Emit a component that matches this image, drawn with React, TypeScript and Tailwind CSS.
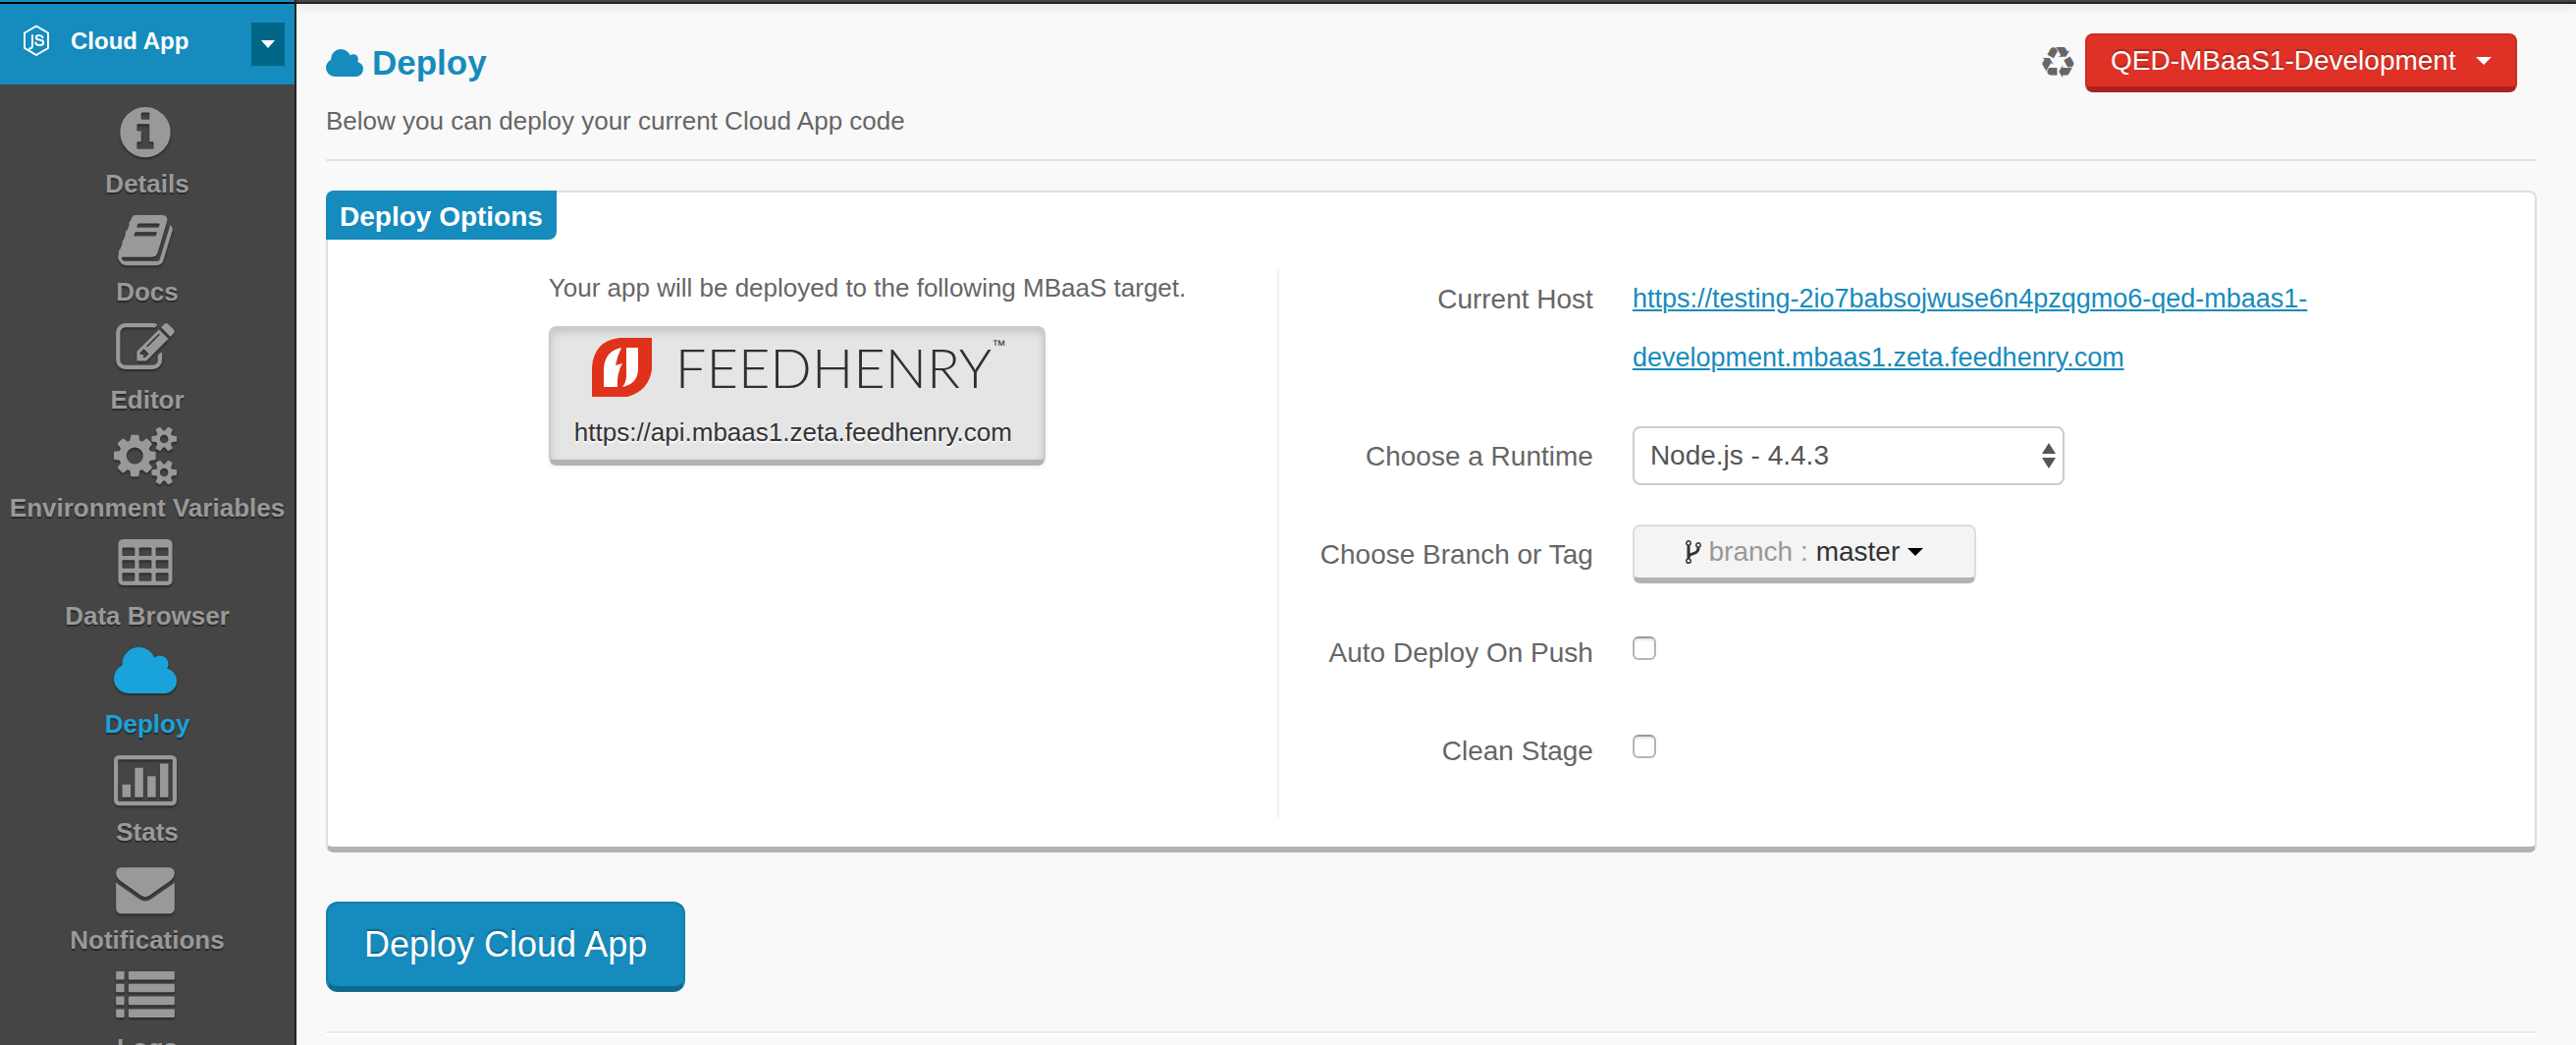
import type { ReactNode } from 'react';

const BOOK =
  'M1703 478q40 57 18 129l-275 906q-19 64-76.5 107.5t-122.5 43.5h-923q-77 0-148.5-53.5t-99.5-131.5q-24-67-2-127 0-4 3-27t4-37q1-8-3-21.5t-3-19.5q2-11 8-21t16.5-23.5 16.5-23.5q23-38 45-91.5t30-91.5q3-10 .5-30t-.5-28q3-11 17-28t17-23q21-36 42-92t25-90q1-9-2.5-32t.5-28q4-13 22-30.5t22-22.5q19-26 42.5-84.5t27.5-96.5q1-8-3-25.5t-2-26.5q2-8 9-18t18-23 17-21q8-12 16.5-30.5t15-35 16-36 19.5-32 26.5-23.5 36-11.5 47.5 5.5l-1 3q38-9 51-9h761q74 0 114 56t18 130l-274 906q-36 119-71.5 153.5t-128.5 34.5h-869q-27 0-38 15-11 16-1 43 24 70 144 70h923q29 0 56-15.5t35-41.5l300-987q7-22 5-57 38 15 59 43zm-1064 2q-4 13 2 22.5t20 9.5h608q13 0 25.5-9.5t16.5-22.5l21-64q4-13-2-22.5t-20-9.5h-608q-13 0-25.5 9.5t-16.5 22.5zm-83 256q-4 13 2 22.5t20 9.5h608q13 0 25.5-9.5t16.5-22.5l21-64q4-13-2-22.5t-20-9.5h-608q-13 0-25.5 9.5t-16.5 22.5z';
const INFO =
  'M1152 1376v-160q0-14-9-23t-23-9h-96v-512q0-14-9-23t-23-9h-320q-14 0-23 9t-9 23v160q0 14 9 23t23 9h96v320h-96q-14 0-23 9t-9 23v160q0 14 9 23t23 9h448q14 0 23-9t9-23zm-128-896v-160q0-14-9-23t-23-9h-192q-14 0-23 9t-9 23v160q0 14 9 23t23 9h192q14 0 23-9t9-23zm640 416q0 209-103 385.5t-279.5 279.5-385.5 103-385.5-103-279.5-279.5-103-385.5 103-385.5 279.5-279.5 385.5-103 385.5 103 279.5 279.5 103 385.5z';
const EDIT =
  'M888 1184l116-116-152-152-116 116v56h96v96h56zm440-720q-16-16-33 1l-350 350q-17 17-1 33t33-1l350-350q17-17 1-33zm80 594v190q0 119-84.5 203.5t-203.5 84.5h-832q-119 0-203.5-84.5t-84.5-203.5v-832q0-119 84.5-203.5t203.5-84.5h832q63 0 117 25 15 7 18 23 3 17-9 29l-49 49q-14 14-32 8-23-6-45-6h-832q-66 0-113 47t-47 113v832q0 66 47 113t113 47h832q66 0 113-47t47-113v-126q0-13 9-22l64-64q15-15 35-7t20 29zm-96-738l288 288-672 672h-288v-288zm444 132l-92 92-288-288 92-92q28-28 68-28t68 28l152 152q28 28 28 68t-28 68z';
const COGS =
  'M896 896q0-106-75-181t-181-75-181 75-75 181 75 181 181 75 181-75 75-181zm768 512q0-52-38-90t-90-38-90 38-38 90q0 53 37.5 90.5t90.5 37.5 90.5-37.5 37.5-90.5zm0-1024q0-52-38-90t-90-38-90 38-38 90q0 53 37.5 90.5t90.5 37.5 90.5-37.5 37.5-90.5zm-384 421v185q0 10-7 19.5t-16 10.5l-155 24q-11 35-32 76 34 48 90 115 7 11 7 20 0 12-7 19-23 30-82.5 89.5t-78.5 59.5q-11 0-21-7l-115-90q-37 19-77 31-11 108-23 155-7 24-30 24h-186q-11 0-20-7.5t-10-17.5l-23-153q-34-10-75-31l-118 89q-7 7-20 7-11 0-21-8-144-133-144-160 0-9 7-19 10-14 41-53t47-61q-23-44-35-82l-152-24q-10-1-17-9.5t-7-19.5v-185q0-10 7-19.5t16-10.5l155-24q11-35 32-76-34-48-90-115-7-11-7-20 0-12 7-20 22-30 82-89t79-59q11 0 21 7l115 90q34-18 77-32 11-108 23-154 7-24 30-24h186q11 0 20 7.5t10 17.5l23 153q34 10 75 31l118-89q8-7 20-7 11 0 21 8 144 133 144 160 0 8-7 19-12 16-42 54t-45 60q23 48 34 82l152 23q10 2 17 10.5t7 19.5zm640 533v140q0 16-149 31-12 27-30 52 51 113 51 138 0 4-4 7-122 71-124 71-8 0-46-47t-52-68q-20 2-30 2t-30-2q-14 21-52 68t-46 47q-2 0-124-71-4-3-4-7 0-25 51-138-18-25-30-52-149-15-149-31v-140q0-16 149-31 13-29 30-52-51-113-51-138 0-4 4-7 4-2 35-20t59-34 30-16q8 0 46 46.5t52 67.5q20-2 30-2t30 2q51-71 92-112l6-2q4 0 124 70 4 3 4 7 0 25-51 138 17 23 30 52 149 15 149 31zm0-1024v140q0 16-149 31-12 27-30 52 51 113 51 138 0 4-4 7-122 71-124 71-8 0-46-47t-52-68q-20 2-30 2t-30-2q-14 21-52 68t-46 47q-2 0-124-71-4-3-4-7 0-25 51-138-18-25-30-52-149-15-149-31v-140q0-16 149-31 13-29 30-52-51-113-51-138 0-4 4-7 4-2 35-20t59-34 30-16q8 0 46 46.5t52 67.5q20-2 30-2t30 2q51-71 92-112l6-2q4 0 124 70 4 3 4 7 0 25-51 138 17 23 30 52 149 15 149 31z';
const CLOUD =
  'M1984 1152q0 159-112.5 271.5t-271.5 112.5h-1088q-185 0-316.5-131.5t-131.5-316.5q0-132 71-241.5t187-163.5q-2-28-2-43 0-212 150-362t362-150q158 0 286.5 88t187.5 230q70-62 166-62 106 0 181 75t75 181q0 75-41 138 129 30 213 134.5t84 239.5z';
const ENVELOPE =
  'M1792 710v794q0 66-47 113t-113 47h-1472q-66 0-113-47t-47-113v-794q44 49 101 87 362 246 497 345 57 42 92.5 65.5t94.5 48 110 24.5h2q51 0 110-24.5t94.5-48 92.5-65.5q170-123 498-345 57-39 100-87zm0-294q0 79-49 151t-122 123q-376 261-468 325-10 7-42.5 31t-54 38.5-52 32.5-57.5 27-50 9h-2q-23 0-50-9t-57.5-27-52-32.5-54-38.5-42.5-31q-91-64-262-182.5t-205-142.5q-62-42-117-115.5t-55-136.5q0-78 41.5-130t118.5-52h1472q65 0 112.5 47t47.5 113z';
const FORK =
  'M672 1472q0-40-28-68t-68-28-68 28-28 68 28 68 68 28 68-28 28-68zm0-1152q0-40-28-68t-68-28-68 28-28 68 28 68 68 28 68-28 28-68zm640 128q0-40-28-68t-68-28-68 28-28 68 28 68 68 28 68-28 28-68zm96 0q0 52-26 96.5t-70 69.5q-2 287-226 414-67 38-203 81-128 40-169.5 71t-41.5 100v26q44 25 70 69.5t26 96.5q0 80-56 136t-136 56-136-56-56-136q0-52 26-96.5t70-69.5v-820q-44-25-70-69.5t-26-96.5q0-80 56-136t136-56 136 56 56 136q0 52-26 96.5t-70 69.5v497q54-26 154-57 55-17 87.5-29.5t70.5-31 59-39.5 40.5-51 28-69.5 8.5-91.5q-44-25-70-69.5t-26-96.5q0-80 56-136t136-56 136 56 56 136z';

type NavItem = { label: string; viewBox: string; icon: ReactNode; active?: boolean };

const columns = [128, 640, 1152];
const rows = [256, 640, 1024];
const lines = [0, 384, 768, 1152];

const NAV: NavItem[] = [
  { label: 'Details', viewBox: '-64 -84 1920 1920', icon: <path d={INFO} /> },
  { label: 'Docs', viewBox: '-64 -84 1920 1920', icon: <path d={BOOK} /> },
  { label: 'Editor', viewBox: '-64 -84 1920 1920', icon: <path d={EDIT} /> },
  { label: 'Environment Variables', viewBox: '0 -64 1920 1920', icon: <path d={COGS} /> },
  {
    label: 'Data Browser',
    viewBox: '-128 -210 1920 1920',
    icon: (
      <>
        <mask id="cells">
          <rect width="1664" height="1408" fill="white" />
          {rows.map((y) =>
            columns.map((x) => <rect key={x + '-' + y} x={x} y={y} width="384" height="256" rx="32" fill="black" />),
          )}
        </mask>
        <rect width="1664" height="1408" rx="160" mask="url(#cells)" />
      </>
    ),
  },
  { label: 'Deploy', viewBox: '64 -84 1920 1920', icon: <path d={CLOUD} />, active: true },
  {
    label: 'Stats',
    viewBox: '0 -210 1920 1920',
    icon: (
      <>
        <rect x="64" y="64" width="1792" height="1408" rx="96" fill="none" stroke="currentColor" strokeWidth="128" />
        <path d="M256 896h256v384H256zM640 384h256v896H640zM1024 640h256v640h-256zM1408 256h256v1024h-256z" />
      </>
    ),
  },
  { label: 'Notifications', viewBox: '-64 -84 1920 1920', icon: <path d={ENVELOPE} /> },
  {
    label: 'Logs',
    viewBox: '-64 -210 1920 1920',
    icon: lines.map((y) => (
      <g key={y}>
        <rect y={y} width="256" height="256" rx="32" />
        <rect x="384" y={y} width="1408" height="256" rx="32" />
      </g>
    )),
  },
];

function Caret({ className }: { className: string }) {
  return (
    <svg viewBox="0 0 16 8" preserveAspectRatio="none" fill="currentColor" className={className} aria-hidden="true">
      <path d="M0 0h16L8 8z" />
    </svg>
  );
}

function Sidebar() {
  return (
    <aside className="w-[302px] shrink-0 overflow-hidden border-r-2 border-[#232525] bg-[#444544]">
      <div className="h-0.5 bg-[#168bbd]" />
      <div className="flex h-[84px] items-center border-t-2 border-black bg-[#168bbd] pr-[10px] pl-[23px] text-white">
        <svg
          viewBox="0 0 28 32"
          fill="none"
          stroke="currentColor"
          strokeWidth="2"
          strokeLinejoin="round"
          strokeLinecap="round"
          className="mb-2 h-8 w-7"
          aria-hidden="true"
        >
          <path d="M10 28.6L2 24V8.500L14 1.500l12 7V24l-12 7-3-1.700M10 11v10.500q0 3-3 3M20.500 13q-1-2-3.500-2-3.200 0-3.200 2.300 0 2 3.500 2.300 3.900.4 3.900 2.900 0 2.600-3.900 2.600-3.500 0-4-2.500" />
        </svg>
        <span className="mb-1.5 ml-[21px] flex-1 text-2xl font-bold">Cloud App</span>
        <button type="button" aria-label="Switch app" className="flex h-11 w-[34px] items-center justify-center bg-[#006687]">
          <Caret className="h-2 w-[14px]" />
        </button>
      </div>
      <nav className="flex flex-col pt-4">
        {NAV.map(({ label, viewBox, icon, active }) => (
          <a
            key={label}
            href={'#' + label.toLowerCase().replace(' ', '-')}
            className={
              'flex h-[110px] flex-col items-center text-[26px] leading-8 font-bold whitespace-nowrap [text-shadow:0_2px_1px_#2b2b2b] ' +
              (active ? 'text-[#1aa2db]' : 'text-[#999999]')
            }
          >
            <svg viewBox={viewBox} fill="currentColor" className="mr-1 h-16 w-16 drop-shadow-[0_2px_1px_#2b2b2b]" aria-hidden="true">
              {icon}
            </svg>
            <span className="mt-[5px]">{label}</span>
          </a>
        ))}
      </nav>
    </aside>
  );
}

function TargetCard() {
  return (
    <div className="mt-5 flex h-[142px] w-[506px] flex-col rounded-lg border-2 border-b-[6px] border-[#cbcbcb] border-b-[#b2b2b2] bg-[#e5e5e5] px-6 shadow-[inset_0_4px_8px_rgba(0,0,0,0.15),0_2px_4px_rgba(0,0,0,0.06)]">
      <div className="flex h-[88px] items-start pt-[10px] pl-[18px]">
        <svg viewBox="0 0 61 60" className="h-[60px] w-[61px] shrink-0" aria-hidden="true">
          <path d="M0 60V30Q2 3 28 0H61V32Q58 54 36 60Z" fill="#e0311a" />
          <path d="M12 50V30Q14 13 30 10Q26 18 24 28L31 26Q25 36 26 50Z" fill="#fff" />
          <path d="M35 10H47V33Q46 47 31 50Q36 44 35 34Z" fill="#fff" />
        </svg>
        <span className="ml-6 pt-0.5 font-[Lato] text-[56px] leading-[56px] font-light text-[#332e2f]">FEEDHENRY</span>
        <span className="text-sm leading-none text-[#332e2f]">™</span>
      </div>
      <p className="text-[26px] leading-9 text-[#333333] [text-shadow:0_2px_2px_white]">https://api.mbaas1.zeta.feedhenry.com</p>
    </div>
  );
}

const LABEL = 'h-[60px] w-[320px] shrink-0 text-right text-[28px] leading-[62px] text-[#666666]';
const CHECK =
  'mt-[14px] h-6 w-6 appearance-none rounded-md border-2 border-[#b5b5b5] border-t-[#9a9a9a] bg-white shadow-[inset_0_2px_2px_rgba(0,0,0,0.1)] checked:bg-[#168bbd]';

export default function App() {
  return (
    <div className="flex h-screen overflow-hidden bg-[#f9f9f9] font-['Liberation_Sans',Arial,sans-serif]">
      <Sidebar />
      <div className="min-w-0 flex-1">
        <div className="h-1 border-b-2 border-[#222425] bg-[#444544] shadow-[0_2px_10px_rgba(0,0,0,0.15)]" />
        <main className="pr-10 pl-[30px]">
          <header className="flex h-[160px] justify-between border-b-2 border-[#e3e3e3] pr-5">
            <div>
              <h1 className="mt-10 flex items-center gap-[9px] text-[35px] leading-10 font-bold text-[#168bbd]">
                <svg viewBox="64 128 1920 1408" fill="currentColor" className="h-7 w-[38px]" aria-hidden="true">
                  <path d={CLOUD} />
                </svg>
                Deploy
              </h1>
              <p className="mt-[21px] text-[26px] leading-9 text-[#666666]">Below you can deploy your current Cloud App code</p>
            </div>
            <div className="mt-[30px] flex h-[60px] items-center gap-2">
              <span className="font-['DejaVu_Sans'] text-[44px] leading-[60px] text-[#666666]">♻</span>
              <button
                type="button"
                className="flex h-full w-[440px] items-center justify-between rounded-lg border-2 border-b-[6px] border-[#c92c23] border-b-[#a8231d] bg-[#e03127] px-6 text-[28px] text-white [text-shadow:0_-2px_1px_rgba(0,0,0,0.25)]"
              >
                QED-MBaaS1-Development
                <Caret className="h-2 w-4" />
              </button>
            </div>
          </header>

          <section className="mt-[30px] rounded-lg border-2 border-b-[6px] border-[#dddddd] border-b-[#b2b2b2] bg-white">
            <h2 className="-mt-0.5 -ml-0.5 flex h-[50px] w-fit items-center rounded-tl-lg rounded-br-lg bg-[#168bbd] px-[14px] pt-1 text-[28px] font-bold text-white">
              Deploy Options
            </h2>
            <div className="flex pt-[30px] pb-[30px]">
              <div className="w-[43.1%] border-r-2 border-[#eeeeee] pl-[10%]">
                <p className="text-[26px] leading-[38px] text-[#666666]">Your app will be deployed to the following MBaaS target.</p>
                <TargetCard />
              </div>
              <form className="flex flex-1 flex-col gap-10 pb-[38px]">
                <div className="flex gap-10">
                  <span className={LABEL}>Current Host</span>
                  <a
                    href="https://testing-2io7babsojwuse6n4pzqgmo6-qed-mbaas1-development.mbaas1.zeta.feedhenry.com"
                    className="max-w-[740px] text-[27px] leading-[60px] text-[#168bbd] underline decoration-2 underline-offset-2"
                  >
                    https://testing-2io7babsojwuse6n4pzqgmo6-qed-mbaas1-development.mbaas1.zeta.feedhenry.com
                  </a>
                </div>
                <div className="flex gap-10">
                  <label htmlFor="runtime" className={LABEL}>
                    Choose a Runtime
                  </label>
                  <div className="relative w-[440px]">
                    <select
                      id="runtime"
                      className="h-[60px] w-full appearance-none rounded-lg border-2 border-[#cccccc] bg-white px-4 text-[28px] text-[#555555]"
                    >
                      <option>Node.js - 4.4.3</option>
                    </select>
                    <svg viewBox="0 0 14 26" fill="#555555" className="pointer-events-none absolute top-[17px] right-[9px] h-[26px] w-[14px]" aria-hidden="true">
                      <path d="M0 11L7 0l7 11zM0 15h14L7 26z" />
                    </svg>
                  </div>
                </div>
                <div className="flex gap-10">
                  <span className={LABEL}>Choose Branch or Tag</span>
                  <button
                    type="button"
                    className="flex h-[60px] w-[350px] items-center justify-center gap-2 rounded-lg border-2 border-b-[6px] border-[#dddddd] border-b-[#b2b2b2] bg-[#f4f4f4] text-[28px] text-[#333333]"
                  >
                    <svg viewBox="384 128 1024 1536" fill="currentColor" className="h-6 w-4" aria-hidden="true">
                      <path d={FORK} />
                    </svg>
                    <span className="text-[#999999]">branch :</span>
                    master
                    <Caret className="h-2 w-4 text-black" />
                  </button>
                </div>
                <div className="flex gap-10">
                  <label htmlFor="auto-deploy" className={LABEL}>
                    Auto Deploy On Push
                  </label>
                  <input id="auto-deploy" type="checkbox" className={CHECK} />
                </div>
                <div className="flex gap-10">
                  <label htmlFor="clean-stage" className={LABEL}>
                    Clean Stage
                  </label>
                  <input id="clean-stage" type="checkbox" className={CHECK} />
                </div>
              </form>
            </div>
          </section>

          <button
            type="button"
            className="mt-[50px] block h-[92px] rounded-xl border-2 border-b-[6px] border-[#137fad] border-b-[#106a90] bg-[#168bbd] px-[37px] text-4xl text-white [text-shadow:0_-2px_1px_rgba(0,0,0,0.25)]"
          >
            Deploy Cloud App
          </button>
          <hr className="mt-10 h-1 border-t-2 border-b-2 border-t-[#ececec] border-b-white" />
        </main>
      </div>
    </div>
  );
}
